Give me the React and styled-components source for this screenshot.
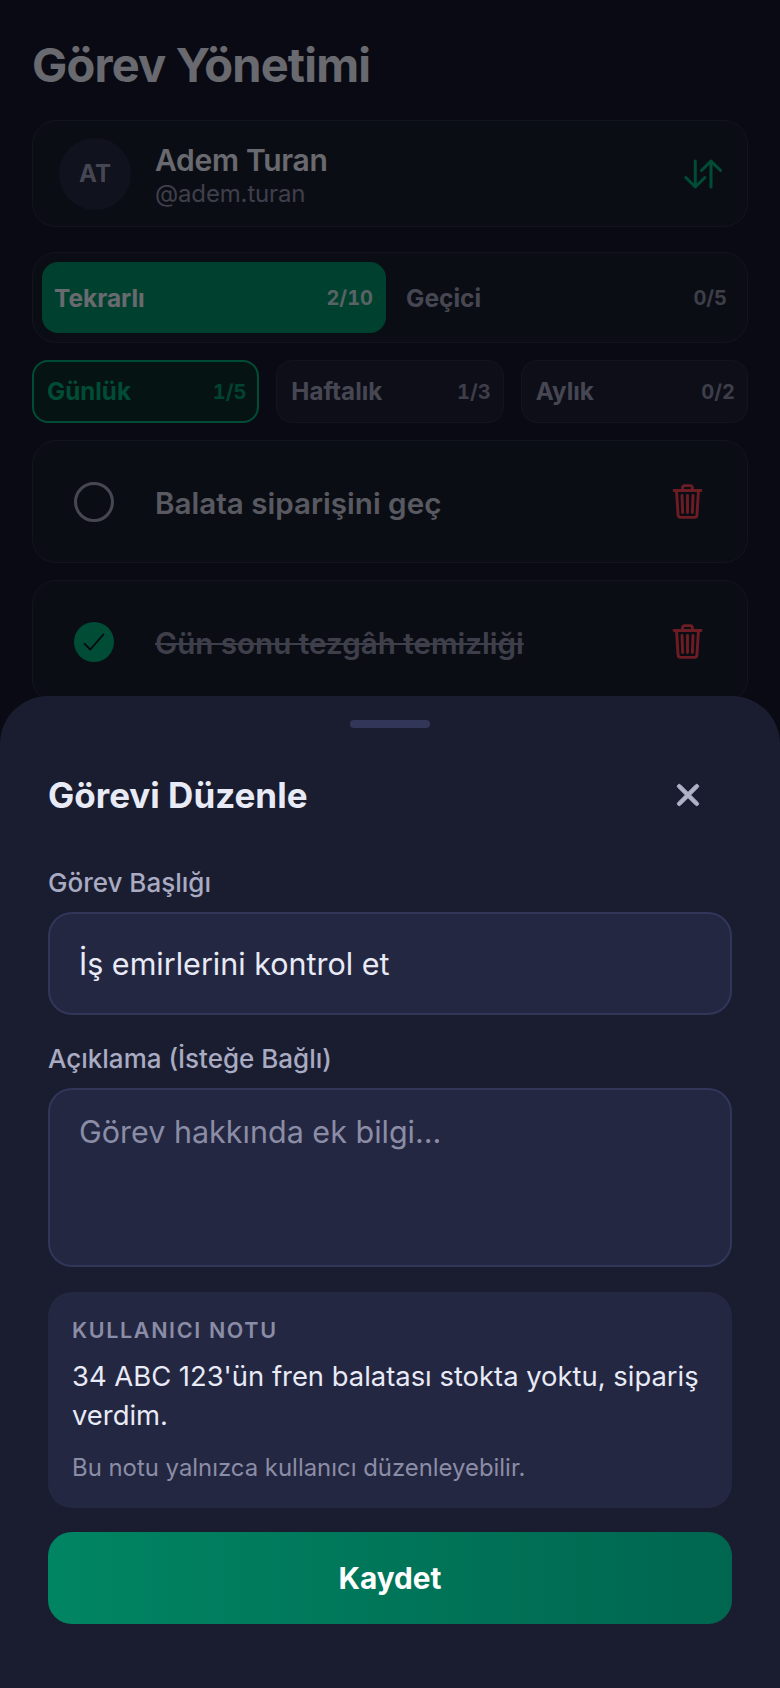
import React from "react";
import styled, { createGlobalStyle } from "styled-components";
import { IoTrashOutline, IoCheckmark, IoClose } from "react-icons/io5";

const GlobalStyle = createGlobalStyle`
  html, body {
    margin: 0;
    background: #15172b;
  }
  * {
    box-sizing: border-box;
  }
`;

const Screen = styled.div`
  position: relative;
  width: 780px;
  height: 1688px;
  overflow: hidden;
  background: #15172b;
  font-family: Inter, "Noto Sans", sans-serif;
`;

const Page = styled.div`
  display: flex;
  flex-direction: column;
  padding: 39px 32px 0;
`;

const Title = styled.h1`
  margin: 0 0 29px;
  font-size: 47px;
  line-height: 52px;
  font-weight: 700;
  letter-spacing: -0.8px;
  color: #e8eaf6;
`;

const UserCard = styled.div`
  display: flex;
  align-items: center;
  height: 107px;
  padding: 0 26px;
  gap: 24px;
  background: #1a1d2e;
  border: 1px solid #2a2d44;
  border-radius: 24px;
`;

const Avatar = styled.div`
  display: flex;
  align-items: center;
  justify-content: center;
  width: 72px;
  height: 72px;
  border-radius: 50%;
  background: #252840;
  color: #9b9db5;
  font-size: 24px;
  font-weight: 700;
`;

const UserInfo = styled.div`
  flex: 1;
  display: flex;
  flex-direction: column;
  gap: 1px;
  padding-top: 2px;
`;

const UserName = styled.div`
  font-size: 30px;
  line-height: 36px;
  font-weight: 600;
  letter-spacing: -0.3px;
  color: #e8eaf6;
`;

const UserHandle = styled.div`
  font-size: 24px;
  line-height: 29px;
  letter-spacing: -0.15px;
  color: #8b8da6;
`;

const SwapSvg = styled.svg`
  flex: none;
  width: 40px;
  height: 32px;
  margin-right: -2px;
  fill: none;
  stroke: #00a877;
  stroke-width: 3;
  stroke-linecap: round;
  stroke-linejoin: round;
`;

const TypeTabs = styled.div`
  display: grid;
  grid-template-columns: 344px 1fr;
  gap: 8px;
  height: 91px;
  margin-top: 25px;
  padding: 9px 7px 9px 9px;
  background: #1a1d2e;
  border: 1px solid #2a2d44;
  border-radius: 24px;
`;

const TypeTab = styled.div`
  display: flex;
  align-items: center;
  justify-content: space-between;
  padding: 0 13px 0 12px;
  border-radius: 16px;
  background: ${(p) => (p.$active ? "#008f66" : "transparent")};
  color: ${(p) => (p.$active ? "#e8eaf6" : "#9b9db5")};
  font-size: 24.5px;
  font-weight: 700;
`;

const Count = styled.span`
  font-size: 20px;
  font-weight: 700;
  font-feature-settings: "tnum";
  opacity: 0.85;
`;

const PeriodTabs = styled.div`
  display: grid;
  grid-template-columns: repeat(3, 1fr);
  gap: 17px;
  margin-top: 17px;
`;

const PeriodTab = styled.div`
  display: flex;
  align-items: center;
  justify-content: space-between;
  height: 63px;
  padding: ${(p) => (p.$active ? "0 11px 0 13px" : "0 12px 0 14px")};
  border-radius: 16px;
  border: ${(p) => (p.$active ? "2px solid #00a877" : "1px solid #2a2d44")};
  background: ${(p) => (p.$active ? "#0f2a2a" : "#1e2135")};
  color: ${(p) => (p.$active ? "#00a877" : "#9b9db5")};
  font-size: 24.2px;
  font-weight: 700;
`;

const TaskList = styled.div`
  display: flex;
  flex-direction: column;
  gap: 17px;
  margin-top: 17px;
`;

const TaskCard = styled.div`
  display: flex;
  align-items: center;
  height: 123px;
  padding: 0 42px 0 41px;
  gap: 41px;
  background: #1a1d2e;
  border: 1px solid #2a2d44;
  border-radius: 24px;
`;

const Circle = styled.div`
  display: flex;
  align-items: center;
  justify-content: center;
  flex: none;
  width: 40px;
  height: 40px;
  border-radius: 50%;
  border: ${(p) => (p.$done ? "none" : "3.5px solid #9b9db5")};
  background: ${(p) => (p.$done ? "#00a877" : "transparent")};
  color: #12141f;
  font-size: 30px;
`;

const TaskText = styled.div`
  flex: 1;
  padding-top: 3px;
  font-size: 29.6px;
  font-weight: 600;
  color: ${(p) => (p.$done ? "#8b8da6" : "#c4c6d8")};
  text-decoration: ${(p) => (p.$done ? "line-through" : "none")};
`;

const TrashIcon = styled(IoTrashOutline)`
  flex: none;
  font-size: 39px;
  color: #f04050;
  margin-right: -2px;

  path {
    stroke-width: 38;
  }
`;

const Overlay = styled.div`
  position: absolute;
  inset: 0;
  background: rgba(0, 0, 0, 0.55);
`;

const Sheet = styled.div`
  position: absolute;
  left: 0;
  right: 0;
  bottom: 0;
  height: 992px;
  display: flex;
  flex-direction: column;
  padding: 24px 48px 0;
  background: #1a1d30;
  border-radius: 48px 48px 0 0;
`;

const Handle = styled.div`
  align-self: center;
  width: 80px;
  height: 8px;
  border-radius: 4px;
  background: #323659;
`;

const SheetHeader = styled.div`
  display: flex;
  align-items: center;
  justify-content: space-between;
  height: 48px;
  margin-top: 43px;
`;

const SheetTitle = styled.h2`
  margin: 0;
  font-size: 35px;
  font-weight: 700;
  color: #e8eaf6;
`;

const CloseIcon = styled(IoClose)`
  font-size: 40px;
  color: #b0b2c8;
  margin-right: 24px;
  stroke: currentColor;
  stroke-width: 12;
`;

const Label = styled.label`
  display: block;
  margin-top: ${(p) => p.$top}px;
  margin-bottom: 14px;
  font-size: 26px;
  line-height: 30px;
  font-weight: 500;
  color: #a9abc2;
`;

const TitleInput = styled.input`
  display: block;
  width: 100%;
  height: 103px;
  padding: 0 29px;
  background: #242741;
  border: 2px solid #323659;
  border-radius: 24px;
  outline: none;
  color: #e8eaf6;
  font-family: inherit;
  font-size: 30.5px;
`;

const DescInput = styled.textarea`
  display: block;
  width: 100%;
  height: 179px;
  padding: 24px 29px;
  background: #242741;
  border: 2px solid #323659;
  border-radius: 24px;
  outline: none;
  resize: none;
  color: #e8eaf6;
  font-family: inherit;
  font-size: 30.5px;
  line-height: 36px;

  &::placeholder {
    color: #8b8da6;
    opacity: 1;
  }
`;

const NoteBox = styled.div`
  display: flex;
  flex-direction: column;
  height: 216px;
  margin-top: 25px;
  padding: 25px 24px 0;
  background: #242741;
  border-radius: 24px;
`;

const NoteLabel = styled.div`
  font-size: 21.5px;
  line-height: 26px;
  font-weight: 600;
  letter-spacing: 1.65px;
  color: #8b8da6;
`;

const NoteText = styled.div`
  margin-top: 14px;
  font-size: 27.4px;
  line-height: 39px;
  color: #e8eaf6;
`;

const NoteHint = styled.div`
  margin-top: 19px;
  font-size: 23.9px;
  line-height: 28px;
  color: #8b8da6;
`;

const SaveButton = styled.button`
  height: 92px;
  margin-top: 24px;
  border: none;
  border-radius: 24px;
  background: linear-gradient(90deg, #008563, #00664f);
  color: #ffffff;
  font-family: inherit;
  font-size: 29.8px;
  font-weight: 700;
`;

const tasks = [
  { id: 1, title: "Balata siparişini geç", done: false },
  { id: 2, title: "Gün sonu tezgâh temizliği", done: true },
];

const periods = [
  { name: "Günlük", count: "1/5", active: true },
  { name: "Haftalık", count: "1/3" },
  { name: "Aylık", count: "0/2" },
];

export default function App() {
  return (
    <Screen>
      <GlobalStyle />
      <Page>
        <Title>Görev Yönetimi</Title>
        <UserCard>
          <Avatar>AT</Avatar>
          <UserInfo>
            <UserName>Adem Turan</UserName>
            <UserHandle>@adem.turan</UserHandle>
          </UserInfo>
          <SwapSvg viewBox="0 0 40 32">
            <path d="M12.3 3V29M2.8 19.5L12.3 29L21.8 19.5" />
            <path d="M28 29V3M18.5 12.5L28 3L37.5 12.5" />
          </SwapSvg>
        </UserCard>
        <TypeTabs>
          <TypeTab $active>
            Tekrarlı <Count>2/10</Count>
          </TypeTab>
          <TypeTab>
            Geçici <Count>0/5</Count>
          </TypeTab>
        </TypeTabs>
        <PeriodTabs>
          {periods.map((p) => (
            <PeriodTab key={p.name} $active={p.active}>
              {p.name} <Count>{p.count}</Count>
            </PeriodTab>
          ))}
        </PeriodTabs>
        <TaskList>
          {tasks.map((t) => (
            <TaskCard key={t.id}>
              <Circle $done={t.done}>{t.done && <IoCheckmark />}</Circle>
              <TaskText $done={t.done}>{t.title}</TaskText>
              <TrashIcon />
            </TaskCard>
          ))}
        </TaskList>
      </Page>
      <Overlay />
      <Sheet>
        <Handle />
        <SheetHeader>
          <SheetTitle>Görevi Düzenle</SheetTitle>
          <CloseIcon />
        </SheetHeader>
        <Label $top={49}>Görev Başlığı</Label>
        <TitleInput readOnly value="İş emirlerini kontrol et" />
        <Label $top={29}>Açıklama (İsteğe Bağlı)</Label>
        <DescInput readOnly placeholder="Görev hakkında ek bilgi..." />
        <NoteBox>
          <NoteLabel>KULLANICI NOTU</NoteLabel>
          <NoteText>34 ABC 123'ün fren balatası stokta yoktu, sipariş verdim.</NoteText>
          <NoteHint>Bu notu yalnızca kullanıcı düzenleyebilir.</NoteHint>
        </NoteBox>
        <SaveButton>Kaydet</SaveButton>
      </Sheet>
    </Screen>
  );
}
